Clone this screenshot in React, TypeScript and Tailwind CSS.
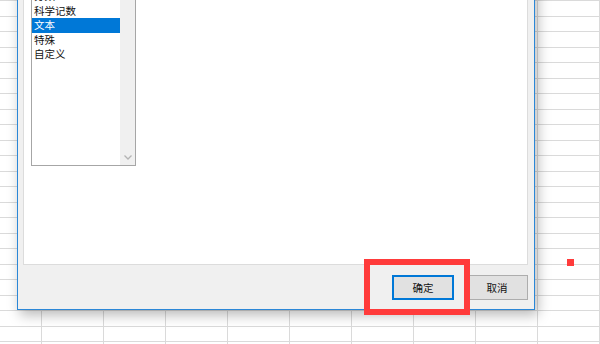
import React from "react";

// list is scrolled: only the tail of the number-format list is in view
const formats = ["分数", "科学记数", "文本", "特殊", "自定义"];

const font = { fontFamily: '"Noto Sans CJK SC", "Noto Sans", sans-serif' };

const SheetGrid = () => {
  const rows = Array.from({ length: 23 });
  const cols = Array.from({ length: 9 });
  return (
    <div className="border-t border-[#dadada]">
      {rows.map((_, r) => (
        <div key={r} className="flex h-[15.5px] border-b border-[#dadada]">
          <div className="w-[42px] shrink-0 border-r border-[#dadada]" />
          {cols.map((_, c) => (
            <div key={c} className="w-[62px] shrink-0 border-r border-[#dadada]" />
          ))}
        </div>
      ))}
    </div>
  );
};

const FormatList = () => (
  <div className="ml-[7px] mt-[23px] flex h-[196px] w-[105px] border border-[#a6a6a6] bg-white">
    <div className="w-[88px] overflow-hidden">
      <div className="mt-[18px]">
        {formats.map((f) => (
          <div
            key={f}
            className={
              "flex h-[14.5px] items-center pl-[2px] text-[10.5px] leading-none " +
              (f === "文本" ? "bg-[#0078d7] text-white" : "text-[#111]")
            }
          >
            {f}
          </div>
        ))}
      </div>
    </div>
    <div className="flex w-[15px] flex-col items-center justify-end bg-[#f0f0f0] pb-[5px]">
      <svg width="8" height="5" viewBox="0 0 8 5">
        <path d="M0.5 0.5 L4 4 L7.5 0.5" fill="none" stroke="#b4b4b4" strokeWidth="1.3" />
      </svg>
    </div>
  </div>
);

export default function App() {
  return (
    <div className="relative h-[344px] w-[600px] overflow-hidden bg-white" style={font}>
      <SheetGrid />

      {/* format cells dialog */}
      <div className="absolute left-[17px] top-[-60px] flex h-[370px] w-[518px] flex-col border border-[#2b87d7] bg-[#f0f0f0] shadow-[3px_5px_12px_rgba(0,0,0,0.28)]">
        <div className="ml-[5px] mr-[6px] mt-[5px] flex-1 border border-[#dcdcdc] bg-white">
          <FormatList />
        </div>
        <div className="flex h-[44px] justify-end gap-[12px] pb-[9px] pr-[6px] pt-[10px]">
          <button className="h-[25px] w-[62px] border-2 border-[#0078d7] bg-[#e1e1e1] text-[10.5px] text-[#111]">
            确定
          </button>
          <button className="h-[25px] w-[62px] border border-[#adadad] bg-[#e1e1e1] text-[10.5px] text-[#111]">
            取消
          </button>
        </div>
      </div>

      {/* annotation marks */}
      <div className="absolute left-[364px] top-[259px] h-[56px] w-[106px] border-[6px] border-[#ff3b3b]" />
      <div className="absolute left-[567px] top-[259px] h-[7px] w-[7px] bg-[#ff3b3b]" />
    </div>
  );
}
